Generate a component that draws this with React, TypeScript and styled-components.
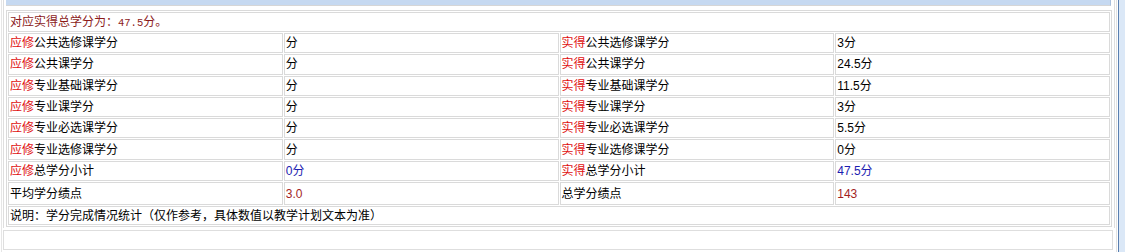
import styled, { createGlobalStyle } from 'styled-components';

// START: data
type Pair = { label: string; value: string };
type CreditRow = { need: Pair; got: Pair };

const rows: CreditRow[] = [
    { need: { label: '公共选修课学分', value: '分' }, got: { label: '公共选修课学分', value: '3分' } },
    { need: { label: '公共课学分', value: '分' }, got: { label: '公共课学分', value: '24.5分' } },
    { need: { label: '专业基础课学分', value: '分' }, got: { label: '专业基础课学分', value: '11.5分' } },
    { need: { label: '专业课学分', value: '分' }, got: { label: '专业课学分', value: '3分' } },
    { need: { label: '专业必选课学分', value: '分' }, got: { label: '专业必选课学分', value: '5.5分' } },
    { need: { label: '专业选修课学分', value: '分' }, got: { label: '专业选修课学分', value: '0分' } },
];

// START: page
const App = () => {
    return (
        <>
            <GlobalStyle />
            <Page>
                <Frame>
                    <Panel>
                        <HeaderBand />
                        <CreditTable>
                            <tbody>
                                <TitleRow>
                                    <td colSpan={4}>
                                        对应实得总学分为：<Mono>47.5</Mono>分。
                                    </td>
                                </TitleRow>
                                {rows.map((r, i) => (
                                    <DataRow key={i}>
                                        <td><Tag>应修</Tag>{r.need.label}</td>
                                        <td>{r.need.value}</td>
                                        <td><Tag>实得</Tag>{r.got.label}</td>
                                        <td>{r.got.value}</td>
                                    </DataRow>
                                ))}
                                <DataRow>
                                    <td><Tag>应修</Tag>总学分小计</td>
                                    <td><Value $tone="blue">0分</Value></td>
                                    <td><Tag>实得</Tag>总学分小计</td>
                                    <td><Value $tone="blue">47.5分</Value></td>
                                </DataRow>
                                <GpaRow>
                                    <td>平均学分绩点</td>
                                    <td><Value $tone="brown">3.0</Value></td>
                                    <td>总学分绩点</td>
                                    <td><Value $tone="brown">143</Value></td>
                                </GpaRow>
                                <NoteRow>
                                    <td colSpan={4}>说明：学分完成情况统计（仅作参考，具体数值以教学计划文本为准）</td>
                                </NoteRow>
                            </tbody>
                        </CreditTable>
                    </Panel>
                    <LowerBox />
                </Frame>
                <EdgeStrip />
            </Page>
        </>
    );
};
export default App;

// START: styling
const GlobalStyle = createGlobalStyle`
    html, body {
        margin: 0;
        padding: 0;
        background: #fff;
    }
    body {
        font-family: "Liberation Sans", "Noto Sans CJK SC", sans-serif;
        font-size: 12px;
        color: #000;
    }
`;

const Page = styled.div`
    display: flex;
    width: 1125px;
    height: 252px;
    overflow: hidden;
`;

const Frame = styled.div`
    box-sizing: border-box;
    width: 1116px;
    height: 252px;
    margin-left: 1px;
    padding: 0 1px;
    border-left: 1px solid #e6e6e6;
    border-right: 1px solid #e2e2e2;
`;

const Panel = styled.div`
    border-left: 1px solid #dedede;
    border-right: 1px solid #dedede;
    padding: 0 2px 1px 2px;
`;

const HeaderBand = styled.div`
    height: 5px;
    margin-right: 1px;
    background: #c6d9f1;
    border-right: 1px solid #a9c0de;
    border-bottom: 1px solid #d6d6d6;
`;

const CreditTable = styled.table`
    width: 100%;
    margin-top: 4px;
    border: 1px solid #dadada;
    border-spacing: 1px;
    table-layout: fixed;

    td {
        box-sizing: border-box;
        width: 25%;
        padding: 0 1px;
        border: 1px solid #dadada;
        vertical-align: middle;
        white-space: nowrap;
        line-height: 14px;
    }
`;

const TitleRow = styled.tr`
    td {
        height: 20px;
        color: #8b1a1a;
    }
`;

const Mono = styled.span`
    font-family: "Liberation Mono", monospace;
    font-size: 10.5px;
`;

const DataRow = styled.tr`
    td {
        height: 20.3px;
    }
`;

const GpaRow = styled.tr`
    td {
        height: 23px;
    }
`;

const NoteRow = styled.tr`
    td {
        height: 19px;
    }
`;

const Tag = styled.span`
    color: #e01010;
`;

const Value = styled.span<{ $tone: 'blue' | 'brown' }>`
    color: ${(p) => (p.$tone === 'blue' ? '#1c1cb0' : '#a31f1f')};
`;

const LowerBox = styled.div`
    height: 18px;
    margin: 2px 2px 0 0;
    border: 1px solid #dedede;
`;

const EdgeStrip = styled.div`
    width: 6px;
    margin-left: 1px;
    border-left: 1px solid #5a7fb0;
    background: #dbe8f7;
`;
